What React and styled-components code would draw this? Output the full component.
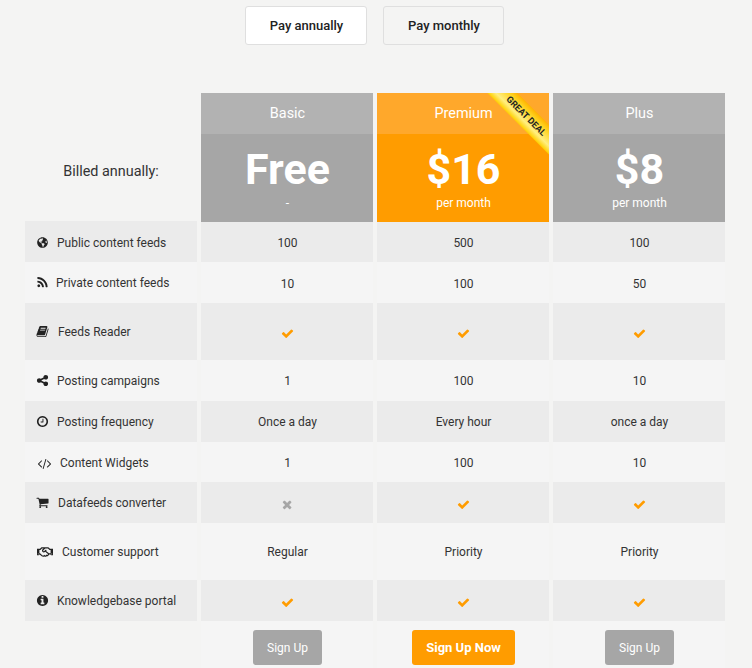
import React from 'react';
import styled, { createGlobalStyle } from 'styled-components';
import { FaGlobeAmericas, FaRegHandshake } from 'react-icons/fa';

const GlobalStyle = createGlobalStyle`
  html, body {
    margin: 0;
    background: #f4f4f3;
    font-family: Roboto, "Liberation Sans", sans-serif;
    color: #333;
  }
`;

const Page = styled.div`
  width: 752px;
  height: 668px;
  overflow: hidden;
  box-sizing: border-box;
  padding-top: 6px;
`;

const Toggle = styled.div`
  display: flex;
  justify-content: center;
  gap: 16px;
  padding-right: 3px;
  margin-bottom: 48px;
`;

const ToggleButton = styled.button`
  box-sizing: border-box;
  width: ${(p) => (p.$active ? 122 : 121)}px;
  height: 39px;
  border: 1px solid #dfdfdf;
  border-radius: 3px;
  background: ${(p) => (p.$active ? '#fff' : '#f4f4f3')};
  color: #222;
  font: 500 13px Roboto, sans-serif;
  padding: 0 0 0 1px;
`;

const Table = styled.div`
  display: grid;
  grid-template-columns: repeat(4, 172px);
  column-gap: 4px;
  margin-left: 25px;
`;

const BilledLabel = styled.div`
  display: flex;
  align-items: center;
  justify-content: center;
  padding-top: 28px;
  font-size: 14.4px;
  color: #333;
`;

const Plan = styled.div`
  position: relative;
  overflow: hidden;
  height: 129px;
  margin-bottom: -1px;
  padding-left: 1px;
  box-sizing: border-box;
  color: #fff;
  text-align: center;
  background: ${(p) => (p.$featured ? '#ff9c00' : '#a6a6a6')};
`;

const PlanName = styled.div`
  height: 41px;
  margin-left: -1px;
  padding-left: 1px;
  line-height: 42px;
  font-size: 14.4px;
  background: ${(p) => (p.$featured ? '#ffa82b' : '#b2b2b2')};
`;

const Price = styled.div`
  font-size: 43px;
  font-weight: 700;
  line-height: 50px;
  margin-top: 10px;
`;

const PriceNote = styled.div`
  font-size: 12px;
  line-height: 16px;
  margin-top: 1px;
`;

const Ribbon = styled.div`
  position: absolute;
  top: 12.5px;
  right: -22.25px;
  width: 90px;
  height: 20.5px;
  line-height: 20.5px;
  transform: rotate(45deg);
  background: linear-gradient(to bottom, #ffb400 0%, #ffd21f 25%, #ffee80 72%, #ffd000 100%);
  color: #222;
  font-size: 9px;
  font-weight: 700;
  text-align: center;
`;

const Cell = styled.div`
  display: flex;
  align-items: center;
  justify-content: center;
  height: ${(p) => p.$height}px;
  background: ${(p) => (p.$shaded ? '#ebebeb' : '#f5f5f5')};
  font-size: 12px;
  color: #333;
`;

const FeatureCell = styled(Cell)`
  justify-content: flex-start;
  padding-left: ${(p) => p.$inset}px;
  padding-top: ${(p) => (p.$drop ? 2 : 0)}px;
  box-sizing: border-box;
`;

const FeatureIcon = styled.span`
  display: inline-flex;
  align-items: center;
  justify-content: center;
  margin-right: ${(p) => p.$gap}px;
  color: #222;
`;

const CellValue = styled.span`
  padding-top: ${(p) => (p.$drop ? 2 : 0)}px;
  padding-left: 1px;
`;

const CellMark = styled.span`
  display: block;
  margin-top: 3px;
  margin-left: ${(p) => (p.$nudge ? 2 : 0)}px;
`;

const Glyph = styled.svg`
  display: block;
  width: 13px;
  height: 13px;
  fill: ${(p) => p.$color || 'currentColor'};
`;

const HandshakeIcon = styled(FaRegHandshake)`
  display: block;
  font-size: 16px;
`;

const GlobeIcon = styled(FaGlobeAmericas)`
  display: block;
  font-size: 11px;
  margin: 0 1px;
`;

const FooterCell = styled.div`
  display: flex;
  justify-content: center;
  padding-top: 9px;
  height: 47px;
  background: ${(p) => (p.$empty ? 'transparent' : '#f5f5f5')};
`;

const SignUp = styled.button`
  box-sizing: border-box;
  height: 35px;
  padding: 0 0 0 1px;
  border: 0;
  border-radius: 3px;
  width: ${(p) => (p.$featured ? 103 : 69)}px;
  background: ${(p) => (p.$featured ? '#ff9c00' : '#a6a6a6')};
  color: #fff;
  font: ${(p) => (p.$featured ? '700 13px' : '400 12px')} Roboto, sans-serif;
`;

const paths = {
  rss: 'M576 1344q0 80-56 136t-136 56-136-56-56-136 56-136 136-56 136 56 56 136zm512 123q2 28-17 48-18 21-47 21h-135q-25 0-43-16.5t-20-41.5q-22-229-184.5-391.5t-391.5-184.5q-25-2-41.5-20t-16.5-43v-135q0-29 21-47 17-17 43-17h5q160 13 306 80.5t259 181.5q114 113 181.5 259t80.5 306zm512 2q2 27-18 47-18 20-46 20h-143q-26 0-44.5-17.5t-19.5-42.5q-12-215-101-408.5t-231.5-336-336-231.5-408.5-102q-25-1-42.5-19.5t-17.5-43.5v-143q0-28 20-46 18-18 44-18h3q262 13 501.5 120t425.5 294q187 186 294 425.5t120 501.5z',
  book: 'M1703 478q40 57 18 129l-275 906q-19 64-76.5 107.5t-122.5 43.5h-923q-77 0-148.5-53.5t-99.5-131.5q-24-67-2-127 0-4 3-27t4-37q1-8-3-21.5t-3-19.5q2-11 8-21t16.5-23.5 16.5-23.5q23-38 45-91.5t30-91.5q3-10 .5-30t-.5-28q3-11 17-28t17-23q21-36 42-92t25-90q1-9-2.5-32t.5-28q4-13 22-30.5t22-22.5q19-26 42.5-84.5t27.5-96.5q1-8-3-25.5t-2-26.5q2-8 9-18t18-23 17-21q8-12 16.5-30.5t15-35 16-36 19.5-32 26.5-23.5 36-11.5 47.5 5.5l-1 3q38-9 51-9h761q74 0 114 56t18 130l-274 906q-36 119-71.5 153.5t-128.5 34.5h-869q-27 0-38 15-11 16-1 43 24 70 144 70h923q29 0 56-15.5t35-41.5l300-987q7-22 5-57 38 15 59 43zm-1064 2q-4 13 2 22.5t20 9.5h608q13 0 25.5-9.5t16.5-22.5l21-64q4-13-2-22.5t-20-9.5h-608q-13 0-25.5 9.5t-16.5 22.5zm-83 256q-4 13 2 22.5t20 9.5h608q13 0 25.5-9.5t16.5-22.5l21-64q4-13-2-22.5t-20-9.5h-608q-13 0-25.5 9.5t-16.5 22.5z',
  share: 'M1344 1024q133 0 226.5 93.5t93.5 226.5-93.5 226.5-226.5 93.5-226.5-93.5-93.5-226.5q0-12 2-34l-360-180q-92 86-218 86-133 0-226.5-93.5t-93.5-226.5 93.5-226.5 226.5-93.5q126 0 218 86l360-180q-2-22-2-34 0-133 93.5-226.5t226.5-93.5 226.5 93.5 93.5 226.5-93.5 226.5-226.5 93.5q-126 0-218-86l-360 180q2 22 2 34t-2 34l360 180q92-86 218-86z',
  clock: 'M1024 544v448q0 14-9 23t-23 9h-320q-14 0-23-9t-9-23v-64q0-14 9-23t23-9h224v-352q0-14 9-23t23-9h64q14 0 23 9t9 23zm416 352q0-148-73-273t-198-198-273-73-273 73-198 198-73 273 73 273 198 198 273 73 273-73 198-198 73-273zm224 0q0 209-103 385.5t-279.5 279.5-385.5 103-385.5-103-279.5-279.5-103-385.5 103-385.5 279.5-279.5 385.5-103 385.5 103 279.5 279.5 103 385.5z',
  code: 'M553 1399l-50 50q-10 10-23 10t-23-10l-466-466q-10-10-10-23t10-23l466-466q10-10 23-10t23 10l50 50q10 10 10 23t-10 23l-393 393 393 393q10 10 10 23t-10 23zm591-1067l-373 1291q-4 13-15.5 19.5t-23.5 2.5l-62-17q-13-4-19.5-15.5t-2.5-24.5l373-1291q4-13 15.5-19.5t23.5-2.5l62 17q13 4 19.5 15.5t2.5 24.5zm657 651l-466 466q-10 10-23 10t-23-10l-50-50q-10-10-10-23t10-23l393-393-393-393q-10-10-10-23t10-23l50-50q10-10 23-10t23 10l466 466q10 10 10 23t-10 23z',
  cart: 'M704 1536q0 52-38 90t-90 38-90-38-38-90 38-90 90-38 90 38 38 90zm896 0q0 52-38 90t-90 38-90-38-38-90 38-90 90-38 90 38 38 90zm128-1088v512q0 24-16.5 42.5t-40.5 21.5l-1044 122q13 60 13 70 0 16-24 64h920q26 0 45 19t19 45-19 45-45 19h-1024q-26 0-45-19t-19-45q0-11 8-31.5t16-36 21.5-40 15.5-29.5l-177-823h-204q-26 0-45-19t-19-45 19-45 45-19h256q16 0 28.5 6.5t19.5 15.5 13 24.5 8 26 5.5 29.5 4.5 26h1201q26 0 45 19t19 45z',
  info: 'M1152 1376v-160q0-14-9-23t-23-9h-96v-512q0-14-9-23t-23-9h-320q-14 0-23 9t-9 23v160q0 14 9 23t23 9h96v320h-96q-14 0-23 9t-9 23v160q0 14 9 23t23 9h448q14 0 23-9t9-23zm-128-896v-160q0-14-9-23t-23-9h-192q-14 0-23 9t-9 23v160q0 14 9 23t23 9h192q14 0 23-9t9-23zm640 416q0 209-103 385.5t-279.5 279.5-385.5 103-385.5-103-279.5-279.5-103-385.5 103-385.5 279.5-279.5 385.5-103 385.5 103 279.5 279.5 103 385.5z',
  check: 'M1671 566q0 40-28 68l-724 724-136 136q-28 28-68 28t-68-28l-136-136-362-362q-28-28-28-68t28-68l136-136q28-28 68-28t68 28l294 295 656-657q28-28 68-28t68 28l136 136q28 28 28 68z',
  times: 'M1298 1322q0 40-28 68l-136 136q-28 28-68 28t-68-28l-294-294-294 294q-28 28-68 28t-68-28l-136-136q-28-28-28-68t28-68l294-294-294-294q-28-28-28-68t28-68l136-136q28-28 68-28t68 28l294 294 294-294q28-28 68-28t68 28l136 136q28 28 28 68t-28 68l-294 294 294 294q28 28 28 68z',
};

const Icon = ({ name, color }) => (
  <Glyph viewBox="0 0 1792 1792" $color={color}>
    <path d={paths[name]} />
  </Glyph>
);

const plans = [
  { name: 'Basic', price: 'Free', note: '-' },
  { name: 'Premium', price: '$16', note: 'per month', featured: true },
  { name: 'Plus', price: '$8', note: 'per month' },
];

const features = [
  { label: 'Public content feeds', icon: <GlobeIcon />, inset: 11, gap: 8, height: 41, drop: true, valueDrop: true, values: ['100', '500', '100'] },
  { label: 'Private content feeds', icon: <Icon name="rss" />, inset: 11, gap: 7, height: 41, valueDrop: true, values: ['10', '100', '50'] },
  { label: 'Feeds Reader', icon: <Icon name="book" />, inset: 11, gap: 9, height: 57, values: [true, true, true] },
  { label: 'Posting campaigns', icon: <Icon name="share" />, inset: 11, gap: 8, height: 41, values: ['1', '100', '10'] },
  { label: 'Posting frequency', icon: <Icon name="clock" />, inset: 11, gap: 8, height: 41, values: ['Once a day', 'Every hour', 'once a day'] },
  { label: 'Content Widgets', icon: <Icon name="code" />, inset: 13, gap: 9, height: 40, drop: true, valueDrop: true, values: ['1', '100', '10'] },
  { label: 'Datafeeds converter', icon: <Icon name="cart" />, inset: 11, gap: 9, height: 41, values: [false, true, true] },
  { label: 'Customer support', icon: <HandshakeIcon />, inset: 12, gap: 9, height: 57, values: ['Regular', 'Priority', 'Priority'] },
  { label: 'Knowledgebase portal', icon: <Icon name="info" />, inset: 11, gap: 8, height: 41, values: [true, true, true] },
];

const renderValue = (value, drop) => {
  if (value === true) return <CellMark><Icon name="check" color="#ff9c00" /></CellMark>;
  if (value === false) return <CellMark $nudge><Icon name="times" color="#a6a6a6" /></CellMark>;
  return <CellValue $drop={drop}>{value}</CellValue>;
};

const App = () => (
  <Page>
    <GlobalStyle />
    <Toggle>
      <ToggleButton $active>Pay annually</ToggleButton>
      <ToggleButton>Pay monthly</ToggleButton>
    </Toggle>
    <Table>
      <BilledLabel>Billed annually:</BilledLabel>
      {plans.map((plan) => (
        <Plan key={plan.name} $featured={plan.featured}>
          <PlanName $featured={plan.featured}>{plan.name}</PlanName>
          <Price>{plan.price}</Price>
          <PriceNote>{plan.note}</PriceNote>
          {plan.featured && <Ribbon>GREAT DEAL</Ribbon>}
        </Plan>
      ))}
      {features.map((feature, i) => (
        <React.Fragment key={feature.label}>
          <FeatureCell $inset={feature.inset} $drop={feature.drop} $height={feature.height} $shaded={i % 2 === 0}>
            <FeatureIcon $gap={feature.gap}>{feature.icon}</FeatureIcon>
            {feature.label}
          </FeatureCell>
          {feature.values.map((value, j) => (
            <Cell key={j} $height={feature.height} $shaded={i % 2 === 0}>
              {renderValue(value, feature.valueDrop)}
            </Cell>
          ))}
        </React.Fragment>
      ))}
      <FooterCell $empty />
      {plans.map((plan) => (
        <FooterCell key={plan.name}>
          <SignUp $featured={plan.featured}>{plan.featured ? 'Sign Up Now' : 'Sign Up'}</SignUp>
        </FooterCell>
      ))}
    </Table>
  </Page>
);

export default App;
